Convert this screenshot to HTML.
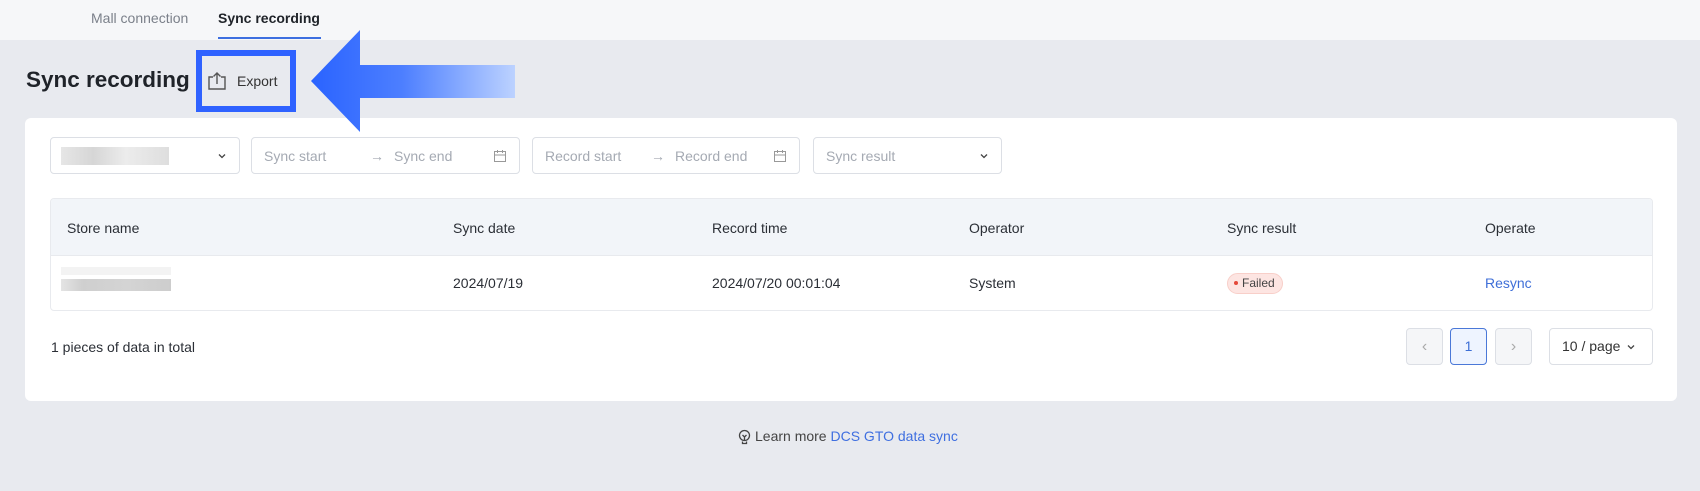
<!DOCTYPE html>
<html><head><meta charset="utf-8"><style>
*{box-sizing:border-box;margin:0;padding:0}
body{width:1700px;height:491px;background:#e8eaef;font-family:"Liberation Sans",sans-serif;position:relative;overflow:hidden;color:#1f2329;font-size:14px}
.abs{position:absolute}
.top{left:0;top:0;width:1700px;height:40px;background:#f6f7f9}
.tab{top:10px;font-size:14px}
.box{border:1px solid #dcdfe5;border-radius:4px;background:#fff;height:37px;top:137px}
.ph{color:#a5aab3;font-size:14px;position:absolute;top:10px}
.th{top:220px;font-size:14px;color:#2b2f36}
.td{top:275px;font-size:14px;color:#2b2f36}
.pg{top:328px;height:37px;border:1px solid #dcdfe5;border-radius:4px;background:#f5f6f8}
</style></head><body>
<div class="abs top"></div>
<div class="abs tab" style="left:91px;color:#7b808a">Mall connection</div>
<div class="abs tab" style="left:218px;font-weight:bold;color:#1f2329">Sync recording</div>
<div class="abs" style="left:218px;top:37px;width:103px;height:2px;background:#3d6fe0"></div>

<div class="abs" style="left:26px;top:67px;font-size:22.5px;font-weight:bold;color:#1f2329">Sync recording</div>

<div class="abs" style="left:25px;top:118px;width:1652px;height:283px;background:#fff;border-radius:6px"></div>

<svg class="abs" style="left:207px;top:71px" width="20" height="20" viewBox="0 0 20 20" fill="none" stroke="#555" stroke-width="1.4"><path d="M6 6H2v12h16V6h-4"/><path d="M10 13V2M6.5 5.5L10 2l3.5 3.5"/></svg>
<div class="abs" style="left:237px;top:73px;font-size:14px;color:#333">Export</div>
<div class="abs" style="left:196px;top:50px;width:100px;height:62px;border:6px solid #2f62ff"></div>
<svg class="abs" style="left:0;top:0" width="600" height="150">
<defs><linearGradient id="g" x1="311" x2="515" y1="0" y2="0" gradientUnits="userSpaceOnUse"><stop offset="0" stop-color="#2a63ff"/><stop offset="0.45" stop-color="#4d7fff"/><stop offset="1" stop-color="#bcd2ff"/></linearGradient></defs>
<path d="M311 81L360 30V65H515V98H360V132Z" fill="url(#g)"/></svg>

<div class="abs box" style="left:50px;width:190px">
 <div class="abs" style="left:10px;top:9px;width:108px;height:18px;background:linear-gradient(90deg,#e6e6e6,#d6d6d6 30%,#ececec 60%,#dedede)"></div>
 <svg class="abs" style="right:12px;top:13px" width="10" height="10" viewBox="0 0 10 10"><path d="M2 3.5L5 6.5 8 3.5" fill="none" stroke="#444" stroke-width="1.3"/></svg>
</div>
<div class="abs box" style="left:251px;width:269px">
 <span class="ph" style="left:12px">Sync start</span><span class="ph" style="left:118px">→</span><span class="ph" style="left:142px">Sync end</span>
 <svg class="abs" style="right:12px;top:11px" width="14" height="14" viewBox="0 0 14 14" fill="none" stroke="#999"><rect x="1.5" y="2.5" width="11" height="10"/><path d="M1.5 6h11M4.5 1v3M9.5 1v3"/></svg>
</div>
<div class="abs box" style="left:532px;width:268px">
 <span class="ph" style="left:12px">Record start</span><span class="ph" style="left:118px">→</span><span class="ph" style="left:142px">Record end</span>
 <svg class="abs" style="right:12px;top:11px" width="14" height="14" viewBox="0 0 14 14" fill="none" stroke="#999"><rect x="1.5" y="2.5" width="11" height="10"/><path d="M1.5 6h11M4.5 1v3M9.5 1v3"/></svg>
</div>
<div class="abs box" style="left:813px;width:189px">
 <span class="ph" style="left:12px">Sync result</span>
 <svg class="abs" style="right:12px;top:13px" width="10" height="10" viewBox="0 0 10 10"><path d="M2 3.5L5 6.5 8 3.5" fill="none" stroke="#444" stroke-width="1.3"/></svg>
</div>

<div class="abs" style="left:50px;top:198px;width:1603px;height:113px;border:1px solid #e8eaee;border-radius:4px;overflow:hidden">
 <div style="height:57px;background:#f2f5f9;border-bottom:1px solid #e8eaee"></div>
</div>
<div class="abs th" style="left:67px">Store name</div>
<div class="abs th" style="left:453px">Sync date</div>
<div class="abs th" style="left:712px">Record time</div>
<div class="abs th" style="left:969px">Operator</div>
<div class="abs th" style="left:1227px">Sync result</div>
<div class="abs th" style="left:1485px">Operate</div>
<div class="abs" style="left:61px;top:267px;width:110px;height:8px;background:#f3f3f3"></div>
<div class="abs" style="left:61px;top:279px;width:110px;height:12px;background:linear-gradient(90deg,#e4e4e4,#cfcfcf 20%,#d4d4d4 60%,#cdcdcd)"></div>
<div class="abs td" style="left:453px">2024/07/19</div>
<div class="abs td" style="left:712px">2024/07/20 00:01:04</div>
<div class="abs td" style="left:969px">System</div>
<div class="abs" style="left:1227px;top:273px;height:21px;padding:0 7px 0 6px;border-radius:11px;background:#fde5e2;border:1px solid #f8cfc9;font-size:12px;line-height:19px;color:#444"><span style="display:inline-block;width:4px;height:4px;border-radius:2px;background:#e5483a;vertical-align:middle;margin-right:4px;margin-top:-2px"></span>Failed</div>
<div class="abs td" style="left:1485px;color:#3f6fd8">Resync</div>

<div class="abs" style="left:51px;top:339px;font-size:14px;color:#2b2f36">1 pieces of data in total</div>
<div class="abs pg" style="left:1406px;width:37px;color:#aaa;text-align:center;line-height:35px;font-size:16px">‹</div>
<div class="abs pg" style="left:1450px;width:37px;background:#eef4ff;border-color:#4a78d8;color:#3d6fd6;text-align:center;line-height:35px">1</div>
<div class="abs pg" style="left:1495px;width:37px;color:#aaa;text-align:center;line-height:35px;font-size:16px">›</div>
<div class="abs pg" style="left:1549px;width:104px;background:#fff;line-height:35px;padding-left:12px;color:#333">10 / page <svg style="vertical-align:middle;margin-left:2px" width="10" height="10" viewBox="0 0 10 10"><path d="M2 3.5L5 6.5 8 3.5" fill="none" stroke="#444" stroke-width="1.3"/></svg></div>

<svg class="abs" style="left:737px;top:429px" width="15" height="16" viewBox="0 0 15 16" fill="none" stroke="#444" stroke-width="1.3"><circle cx="7.5" cy="6.5" r="5"/><path d="M5.5 12.5v2h4v-2M5.5 6l2 2 2-2M7.5 8v3"/></svg>
<div class="abs" style="left:755px;top:428px;font-size:14px;color:#444">Learn more <span style="color:#3f6fe0">DCS GTO data sync</span></div>
</body></html>
